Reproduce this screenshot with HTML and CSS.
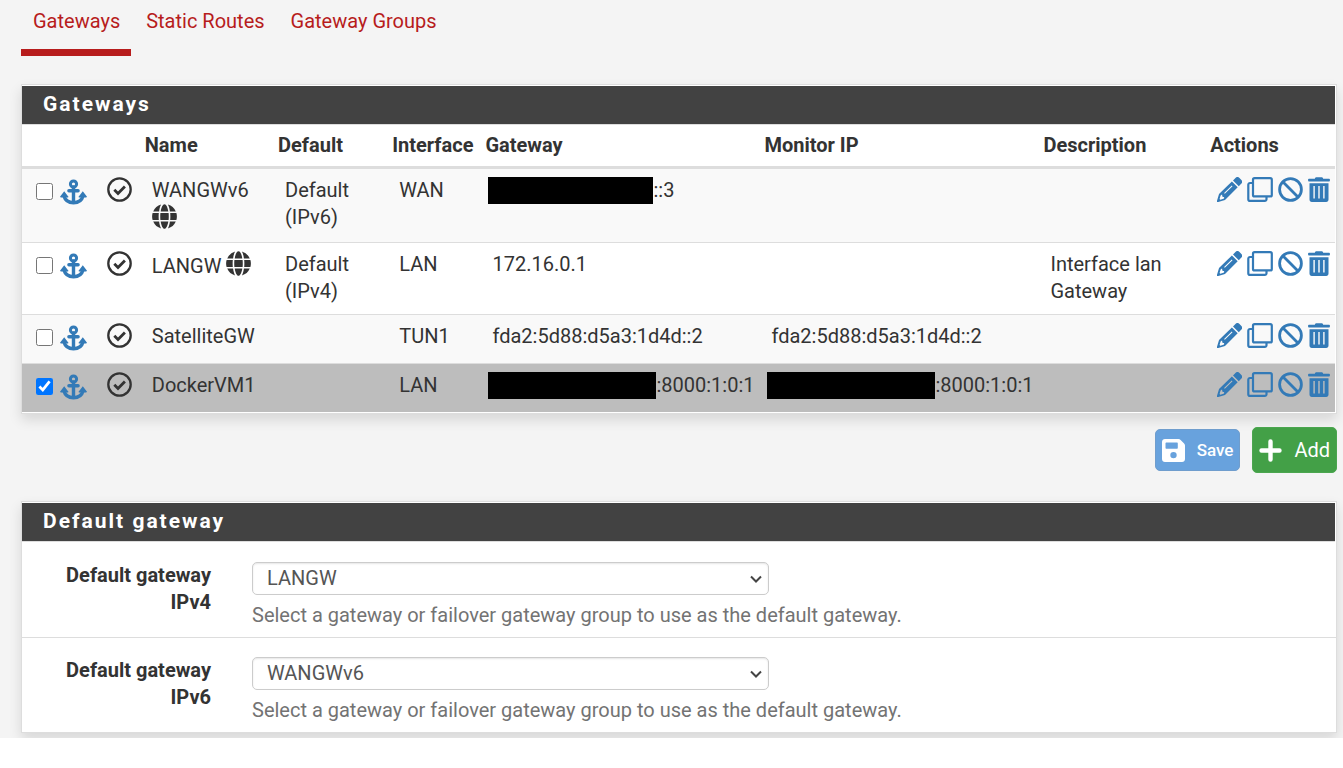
FILE: index.html
```html
<!DOCTYPE html>
<html lang="en">
<head>
<meta charset="utf-8">
<title>Gateways</title>
<link rel="stylesheet" href="styles.css">
</head>
<body>
<svg class="sprite" aria-hidden="true">
  <symbol id="anchor" viewBox="0 0 27 26">
    <circle cx="13.5" cy="5" r="3.1" fill="none" stroke="currentColor" stroke-width="3"/>
    <path d="M13.5 8v15M8.9 11.7h9.2" fill="none" stroke="currentColor" stroke-width="3.400" stroke-linecap="round"/>
    <path d="M4 17c1.200 4.500 5 6.700 9.500 6.700S21.800 21.500 23 17" fill="none" stroke="currentColor" stroke-width="3.400"/>
    <path d="M4.200 12.200L8.600 17.900 7.800 18.600 .8 18.600 0 17.800zM22.800 12.200L18.400 17.900 19.200 18.600 26.200 18.600 27 17.800z" fill="currentColor"/>
  </symbol>
  <symbol id="check" viewBox="0 0 25 25">
    <circle cx="12.500" cy="12.500" r="11.200" fill="none" stroke="currentColor" stroke-width="2.300"/>
    <path d="M7.300 12.800l3.700 3.700 6.900-7" fill="none" stroke="currentColor" stroke-width="2.800"/>
  </symbol>
  <symbol id="globe" viewBox="0 0 25 25">
    <path fill="currentColor" d="M8.700 7.500C9.300 3.400 10.800.2 12.500.2s3.200 3.200 3.800 7.300zM8.400 9.100h8.200a35 35 0 0 1 0 6.800H8.400a35 35 0 0 1 0-6.800zM8.700 17.500h7.600c-.6 4.100-2.100 7.300-3.800 7.300s-3.200-3.200-3.800-7.300zM7.100 7.500H1.200A12.300 12.300 0 0 1 9.100.6C8.100 2.300 7.400 4.700 7.100 7.500zM17.900 7.500h5.900A12.300 12.300 0 0 0 15.900.6c1 1.700 1.700 4.100 2 6.900zM6.800 9.100H.6a12.300 12.300 0 0 0 0 6.800h6.200a36 36 0 0 1 0-6.800zM18.200 9.100h6.200a12.300 12.300 0 0 1 0 6.800h-6.200a36 36 0 0 0 0-6.800zM7.100 17.500H1.200a12.300 12.300 0 0 0 7.900 6.900c-1-1.700-1.700-4.100-2-6.900zM17.900 17.500h5.900a12.300 12.300 0 0 1-7.900 6.900c1-1.700 1.700-4.100 2-6.900z"/>
  </symbol>
  <symbol id="pencil" viewBox="0 0 25 25">
    <path fill="currentColor" d="M18.700.8a2.500 2.500 0 0 1 3.500 0l2.200 2.200a2.500 2.500 0 0 1 0 3.500L21.800 9.200 16 3.400z"/>
    <path fill="currentColor" fill-rule="evenodd" d="M14.900 4.500l5.800 5.800L8.500 22.500a3 3 0 0 1-1.300.8L.9 25.100a.8.8 0 0 1-1-1l1.900-6.300a3 3 0 0 1 .7-1.300zM14.800 8.500L7.100 16.100l.7.700 7.700-7.600zM3.500 18.800l-.9 3.200.7.700 3.200-.9.600-.6v-1.300H6a.8.800 0 0 1-.8-.8v-1.300H4.400z"/>
  </symbol>
  <symbol id="clone" viewBox="0 0 26 25">
    <path d="M6 6H3a1.700 1.700 0 0 0-1.700 1.700v14.500A1.700 1.700 0 0 0 3 23.900h14.800a1.700 1.700 0 0 0 1.700-1.700v-2.800" fill="none" stroke="currentColor" stroke-width="2.200"/>
    <rect x="6" y="1.200" width="18.800" height="18.200" rx="1.500" fill="none" stroke="currentColor" stroke-width="2.200"/>
  </symbol>
  <symbol id="ban" viewBox="0 0 25 25">
    <circle cx="12.500" cy="12.500" r="10.900" fill="none" stroke="currentColor" stroke-width="2.800"/>
    <path d="M4.800 4.800l15.400 15.400" stroke="currentColor" stroke-width="2.800"/>
  </symbol>
  <symbol id="trash" viewBox="0 0 22 25">
    <path fill="currentColor" d="M7.200.8c.2-.4.500-.6 1-.6h5.600c.5 0 .8.200 1 .6l.4.900h5.900c.5 0 .8.300.8.800v1.200c0 .5-.3.800-.8.800H.9c-.5 0-.8-.3-.8-.8V2.500c0-.5.300-.8.800-.8h5.900z"/>
    <path fill="currentColor" fill-rule="evenodd" d="M1.500 6.200h19v16.400c0 1.400-.9 2.300-2.300 2.300H3.800c-1.400 0-2.300-.9-2.300-2.300zM5.400 9v12.600h1.400V9zM10.300 9v12.600h1.400V9zM15.200 9v12.600h1.400V9z"/>
  </symbol>
  <symbol id="disk" viewBox="0 0 23 23">
    <path fill="currentColor" fill-rule="evenodd" d="M3 0h13.500c.8 0 1.500.3 2.100.9l3.500 3.500c.6.600.9 1.300.9 2.100V20c0 1.700-1.300 3-3 3H3c-1.700 0-3-1.300-3-3V3c0-1.700 1.300-3 3-3zM4.500 3.500c-.6 0-1 .4-1 1v4.200c0 .6.400 1 1 1h10.300c.6 0 1-.4 1-1V4.500c0-.6-.4-1-1-1zM11.500 12.900a3.200 3.200 0 1 0 0 6.400 3.200 3.200 0 0 0 0-6.400z"/>
  </symbol>
  <symbol id="plus" viewBox="0 0 23 23">
    <path d="M11.500 2.500v18M2.500 11.500h18" stroke="currentColor" stroke-width="4.400" stroke-linecap="round"/>
  </symbol>
</svg>

<main class="page">
  <nav class="tabs">
    <a class="tab tab-active" href="#">Gateways</a>
    <a class="tab" href="#">Static Routes</a>
    <a class="tab" href="#">Gateway Groups</a>
  </nav>

  <section class="panel">
    <h2 class="panel-title">Gateways</h2>
    <table class="gateways">
      <colgroup>
        <col class="col-select"><col class="col-status"><col class="col-name"><col class="col-default"><col class="col-interface"><col class="col-address"><col class="col-address"><col class="col-description"><col class="col-actions">
      </colgroup>
      <thead>
        <tr><th></th><th></th><th>Name</th><th>Default</th><th>Interface</th><th>Gateway</th><th>Monitor IP</th><th>Description</th><th>Actions</th></tr>
      </thead>
      <tbody>
        <tr>
          <td><div class="select-cell"><input class="tick" type="checkbox" aria-label="Select WANGWv6"><a href="#" aria-label="Move WANGWv6"><svg class="icon-anchor"><use href="#anchor"/></svg></a></div></td>
          <td><svg class="icon"><use href="#check"/></svg></td>
          <td class="name">WANGWv6 <svg class="icon icon-globe"><use href="#globe"/></svg></td>
          <td>Default (IPv6)</td>
          <td>WAN</td>
          <td class="address"><span class="redacted redacted-short"></span>::3</td>
          <td></td>
          <td></td>
          <td><div class="actions"><a href="#" aria-label="Edit"><svg class="icon"><use href="#pencil"/></svg></a><a href="#" aria-label="Copy"><svg class="icon icon-clone"><use href="#clone"/></svg></a><a href="#" aria-label="Disable"><svg class="icon"><use href="#ban"/></svg></a><a href="#" aria-label="Delete"><svg class="icon icon-trash"><use href="#trash"/></svg></a></div></td>
        </tr>
        <tr>
          <td><div class="select-cell"><input class="tick" type="checkbox" aria-label="Select LANGW"><a href="#" aria-label="Move LANGW"><svg class="icon-anchor"><use href="#anchor"/></svg></a></div></td>
          <td><svg class="icon"><use href="#check"/></svg></td>
          <td class="name">LANGW <svg class="icon icon-globe"><use href="#globe"/></svg></td>
          <td>Default (IPv4)</td>
          <td>LAN</td>
          <td class="address">172.16.0.1</td>
          <td></td>
          <td>Interface lan Gateway</td>
          <td><div class="actions"><a href="#" aria-label="Edit"><svg class="icon"><use href="#pencil"/></svg></a><a href="#" aria-label="Copy"><svg class="icon icon-clone"><use href="#clone"/></svg></a><a href="#" aria-label="Disable"><svg class="icon"><use href="#ban"/></svg></a><a href="#" aria-label="Delete"><svg class="icon icon-trash"><use href="#trash"/></svg></a></div></td>
        </tr>
        <tr>
          <td><div class="select-cell"><input class="tick" type="checkbox" aria-label="Select SatelliteGW"><a href="#" aria-label="Move SatelliteGW"><svg class="icon-anchor"><use href="#anchor"/></svg></a></div></td>
          <td><svg class="icon"><use href="#check"/></svg></td>
          <td class="name">SatelliteGW</td>
          <td></td>
          <td>TUN1</td>
          <td class="address">fda2:5d88:d5a3:1d4d::2</td>
          <td class="address">fda2:5d88:d5a3:1d4d::2</td>
          <td></td>
          <td><div class="actions"><a href="#" aria-label="Edit"><svg class="icon"><use href="#pencil"/></svg></a><a href="#" aria-label="Copy"><svg class="icon icon-clone"><use href="#clone"/></svg></a><a href="#" aria-label="Disable"><svg class="icon"><use href="#ban"/></svg></a><a href="#" aria-label="Delete"><svg class="icon icon-trash"><use href="#trash"/></svg></a></div></td>
        </tr>
        <tr class="selected">
          <td><div class="select-cell"><input class="tick" type="checkbox" checked aria-label="Select DockerVM1"><a href="#" aria-label="Move DockerVM1"><svg class="icon-anchor"><use href="#anchor"/></svg></a></div></td>
          <td><svg class="icon"><use href="#check"/></svg></td>
          <td class="name">DockerVM1</td>
          <td></td>
          <td>LAN</td>
          <td class="address"><span class="redacted"></span>:8000:1:0:1</td>
          <td class="address"><span class="redacted"></span>:8000:1:0:1</td>
          <td></td>
          <td><div class="actions"><a href="#" aria-label="Edit"><svg class="icon"><use href="#pencil"/></svg></a><a href="#" aria-label="Copy"><svg class="icon icon-clone"><use href="#clone"/></svg></a><a href="#" aria-label="Disable"><svg class="icon"><use href="#ban"/></svg></a><a href="#" aria-label="Delete"><svg class="icon icon-trash"><use href="#trash"/></svg></a></div></td>
        </tr>
      </tbody>
    </table>
  </section>

  <div class="buttons">
    <button class="btn btn-save" type="button" disabled><svg class="btn-icon"><use href="#disk"/></svg>Save</button>
    <button class="btn btn-add" type="button"><svg class="btn-icon"><use href="#plus"/></svg>Add</button>
  </div>

  <section class="panel">
    <h2 class="panel-title">Default gateway</h2>
    <div class="form-row">
      <label class="form-label" for="gw4">Default gateway IPv4</label>
      <div class="field">
        <div class="select-wrap">
          <select class="select" id="gw4" aria-describedby="gw4-help"><option>LANGW</option></select>
          <svg class="chevron" viewBox="0 0 12 8"><path d="M1 1.500l5 5 5-5"/></svg>
        </div>
        <p class="help" id="gw4-help">Select a gateway or failover gateway group to use as the default gateway.</p>
      </div>
    </div>
    <div class="form-row">
      <label class="form-label" for="gw6">Default gateway IPv6</label>
      <div class="field">
        <div class="select-wrap">
          <select class="select" id="gw6" aria-describedby="gw6-help"><option>WANGWv6</option></select>
          <svg class="chevron" viewBox="0 0 12 8"><path d="M1 1.500l5 5 5-5"/></svg>
        </div>
        <p class="help" id="gw6-help">Select a gateway or failover gateway group to use as the default gateway.</p>
      </div>
    </div>
  </section>
</main>
</body>
</html>
```

FILE: styles.css
```css
* { box-sizing: border-box; }
body {
  margin: 0;
  background: #fff;
  color: #333;
  font: 400 20px/27px Roboto, sans-serif;
}
a { color: #337ab7; text-decoration: none; }
svg { display: block; }
.sprite { position: absolute; width: 0; height: 0; }

.page {
  overflow: hidden;
  padding: 0 6px 5px 21px;
  background: #f4f4f4;
}

.tabs { display: flex; gap: 3px; margin-bottom: 28px; }
.tab {
  padding: 8px 11px 14px 12px;
  border-bottom: 7px solid transparent;
  color: #b71c1c;
}
.tab-active { border-bottom-color: #b71c1c; }

.panel {
  padding-top: 1px;
  border: 1px solid #ddd;
  background: #fff;
  box-shadow: 0 6px 12px rgba(0, 0, 0, .12);
}
.panel-title {
  margin: 0 1px 0 0;
  padding: 5px 21px 6px;
  border-bottom: 1px solid #ddd;
  background: #424242;
  background-clip: padding-box;
  color: #fff;
  font-size: 21px;
  font-weight: 700;
  letter-spacing: 2px;
}

.gateways {
  width: 100%;
  border-right: 1px solid #fff;
  border-bottom: 1px solid #fff;
  border-collapse: separate;
  border-spacing: 0;
  table-layout: fixed;
}
.col-select { width: 5.95%; }
.col-status { width: 3.4%; }
.col-name { width: 10.15%; }
.col-default { width: 8.7%; }
.col-interface { width: 7.1%; }
.col-address { width: 21.25%; }
.col-description { width: 12.7%; }
.col-actions { width: 9.5%; }
.gateways th {
  padding: 7px 0;
  border-bottom: 3px solid #ddd;
  font-weight: 700;
  text-align: left;
}
.gateways td {
  padding: 8px 0 9px 7px;
  border-top: 1px solid #ddd;
  vertical-align: top;
}
.gateways tbody tr:first-child td { border-top: 0; }
.gateways tbody tr:nth-child(odd) { background: #f9f9f9; }
.gateways tbody .selected { background: #bdbdbd; }
.gateways .address { white-space: nowrap; }
.gateways .name { padding-right: 14px; }

.select-cell { display: flex; gap: 7px; padding-left: 7px; height: 31px; }
.tick { width: 17px; height: 17px; margin: 6px 0 0; }
.icon { width: 25px; height: 25px; }
.icon-anchor { width: 27px; height: 26px; margin-top: 2px; }
.icon-globe { display: inline-block; vertical-align: -3px; }
.icon-clone { width: 26px; }
.icon-trash { width: 22px; }
.actions { display: flex; gap: 5px; }

.redacted {
  display: inline-block;
  width: 168px;
  height: 27px;
  margin-left: -4px;
  background: #000;
  vertical-align: top;
}
.redacted-short { width: 165px; }

.buttons {
  display: flex;
  align-items: center;
  justify-content: flex-end;
  gap: 12px;
  margin: 13px 0 28px;
}
.btn {
  display: flex;
  align-items: center;
  gap: 12px;
  padding: 0 6px;
  border: 1px solid;
  border-radius: 5px;
  color: #fff;
  font-family: inherit;
}
.btn-save { height: 42px; border-color: #6f9dcd; background: #68a2dd; font-size: 17px; font-weight: 500; }
.btn-add { height: 46px; border-color: #4ba64f; background: #43a047; font-size: 20px; }
.btn-icon { width: 23px; height: 23px; }

.form-row { display: grid; grid-template-columns: 2fr 10fr; padding: 20px 0 8px; }
.form-row + .form-row { border-top: 1px solid #ddd; padding-top: 19px; }
.form-label { padding: 0 30px 0 40px; font-weight: 700; text-align: right; }
.field { padding: 0 11px; }
.select-wrap { position: relative; width: 48.2%; }
.select {
  display: block;
  width: 100%;
  height: 33px;
  padding: 0 14px;
  border: 1px solid #ccc;
  border-radius: 5px;
  appearance: none;
  background: #fff;
  box-shadow: inset 0 1px 2px rgba(0, 0, 0, .1);
  color: #555;
  font: inherit;
}
.chevron { position: absolute; top: 13px; right: 7px; width: 12px; height: 8px; pointer-events: none; }
.chevron path { fill: none; stroke: #444; stroke-width: 2; }
.help { margin: 7px 0 0; color: #737373; }
```
